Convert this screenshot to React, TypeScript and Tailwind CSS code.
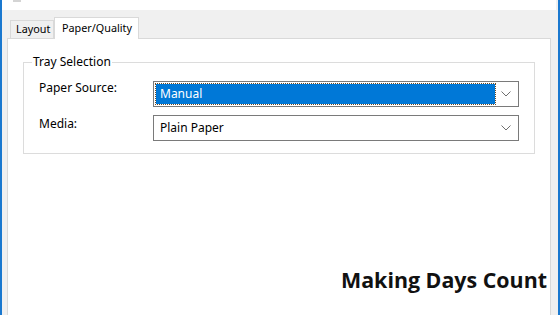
import React from 'react';

const Chevron = () => (
  <svg width="10" height="6" viewBox="0 0 10 6" className="block">
    <polyline points="0.5,0.5 5,5 9.5,0.5" fill="none" stroke="#6f6f6f" strokeWidth="1" />
  </svg>
);

const App = () => {
  const font = { fontFamily: '"Segoe UI", "Noto Sans", sans-serif' };

  return (
    <div className="w-[560px] h-[315px] overflow-hidden flex bg-[#f0f0f0] border-x-2 border-[#1a78cf]" style={font}>
      <div className="flex-1 flex flex-col">
        {/* strip of the window above the tabs */}
        <div className="h-[10px] bg-white mr-[2px] flex">
          <div className="ml-[11px] w-[8px] h-[2px] bg-[#d4d4d4]"></div>
        </div>

        {/* tabs */}
        <div className="h-[28px] flex items-end pl-[8px] relative z-10">
          <div className="h-[18px] w-[44px] border-t border-x border-[#d9d9d9] bg-[#f0f0f0] flex items-center pl-[5px] text-[10.8px] text-black leading-none">
            Layout
          </div>
          <div className="h-[22px] w-[85px] -mb-px border-t border-x border-[#d9d9d9] bg-white flex items-center pl-[7px] text-[10.8px] text-black leading-none">
            Paper/Quality
          </div>
        </div>

        {/* tab panel */}
        <div className="flex-1 ml-[5px] mr-[7px] bg-white border-t border-x border-[#d9d9d9] flex flex-col">
          <div className="relative mx-[15px] mt-[23px] border border-[#dcdcdc] pt-[18px] pb-[12px] px-[15px]">
            <span className="absolute -top-[9px] left-[8px] px-[1px] bg-white text-[12px] leading-[16px] text-black">
              Tray Selection
            </span>
            <div className="grid grid-cols-[114px_1fr] gap-y-[8px] text-[12px] text-black">
              <div className="leading-[16px] -mt-[1px]">Paper Source:</div>
              <div className="h-[26px] border border-[#7a7a7a] bg-white flex items-center p-[2px]">
                <div className="flex-1 h-full bg-[#0078d7] outline-1 outline-dotted outline-[#6b4a24] flex items-center pl-[4px] text-white">
                  Manual
                </div>
                <div className="w-[21px] flex justify-center">
                  <Chevron />
                </div>
              </div>
              <div className="leading-[16px] mt-[1px]">Media:</div>
              <div className="h-[26px] border border-[#7a7a7a] bg-white flex items-center p-[2px]">
                <div className="flex-1 pl-[4px]">Plain Paper</div>
                <div className="w-[21px] flex justify-center">
                  <Chevron />
                </div>
              </div>
            </div>
          </div>

          <div
            className="mt-auto mb-[20px] pr-[3px] text-right text-[21.4px] leading-[30px] font-bold text-[#111]"
            style={{ fontFamily: '"Open Sans", sans-serif' }}
          >
            Making Days Count
          </div>
        </div>
      </div>
    </div>
  );
};

export default App;
